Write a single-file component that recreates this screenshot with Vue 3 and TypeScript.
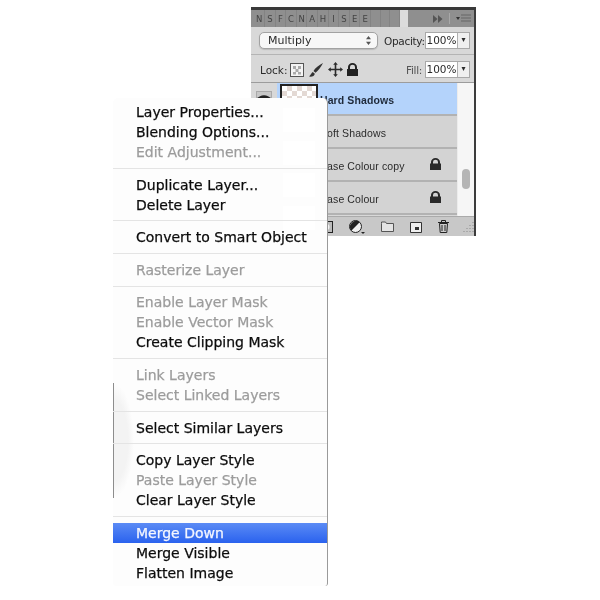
<script setup lang="ts">
interface MenuItem {
  label: string
  off?: boolean
  active?: boolean
}

const tabs = ['N', 'S', 'F', 'C', 'N', 'A', 'H', 'I', 'S', 'E', 'E', '', '', '']

const layers = [
  { name: 'Hard Shadows', selected: true, locked: false },
  { name: 'Soft Shadows', selected: false, locked: false },
  { name: 'Base Colour copy', selected: false, locked: true },
  { name: 'Base Colour', selected: false, locked: true },
]

const menuGroups: MenuItem[][] = [
  [{ label: 'Layer Properties...' }, { label: 'Blending Options...' }, { label: 'Edit Adjustment...', off: true }],
  [{ label: 'Duplicate Layer...' }, { label: 'Delete Layer' }],
  [{ label: 'Convert to Smart Object' }],
  [{ label: 'Rasterize Layer', off: true }],
  [{ label: 'Enable Layer Mask', off: true }, { label: 'Enable Vector Mask', off: true }, { label: 'Create Clipping Mask' }],
  [{ label: 'Link Layers', off: true }, { label: 'Select Linked Layers', off: true }],
  [{ label: 'Select Similar Layers' }],
  [{ label: 'Copy Layer Style' }, { label: 'Paste Layer Style', off: true }, { label: 'Clear Layer Style' }],
  [{ label: 'Merge Down', active: true }, { label: 'Merge Visible' }, { label: 'Flatten Image' }],
]
</script>

<template>
  <div class="page">
    <section class="panel">
      <div class="tabs">
        <span v-for="(t, i) in tabs" :key="i" class="tab">{{ t }}</span>
        <span class="tab tab--active"></span>
        <span class="tabs-end">
          <svg width="10" height="8" viewBox="0 0 10 8"><path d="M0 0l4.500 4L0 8zM5 0l4.500 4L5 8z" fill="#555" /></svg>
          <i class="tabs-rule"></i>
          <svg width="15" height="9" viewBox="0 0 15 9"><path d="M0 3h4L2 6z" fill="#333" /><path d="M5 1h10M5 4h10M5 7h10" stroke="#666" stroke-width="1.200" /></svg>
        </span>
      </div>

      <div class="row row--blend">
        <div class="select">
          <span>Multiply</span>
          <svg width="5" height="9" viewBox="0 0 5 9"><path d="M2.500 0L5 3.300H0zM2.500 9L0 5.700h5z" fill="#555" /></svg>
        </div>
        <label class="field-label">Opacity:</label>
        <div class="field"><span class="field-value">100%</span><span class="field-arrow">▾</span></div>
      </div>

      <div class="row row--lock">
        <span class="lock-label">Lock:</span>
        <svg class="lock-icon" width="14" height="14" viewBox="0 0 14 14">
          <rect x=".5" y=".5" width="13" height="13" fill="#f4f4f4" stroke="#555" />
          <path d="M3 3h3v3H3zM8 3h3v3H8zM5.500 6h3v3h-3zM3 9h3v2.500H3zM8 9h3v2.500H8z" fill="#aaa" />
        </svg>
        <svg class="lock-icon" width="16" height="16" viewBox="0 0 16 16">
          <path d="M15 1C11 3 7 6 5.500 9l2 1.800C10 9 13 5 15 1zM4.800 10c-1.500.5-1.500 2.500-3.800 4.500 3 .5 5.500-.5 5.800-2.800z" fill="#333" />
        </svg>
        <svg class="lock-icon" width="15" height="15" viewBox="0 0 15 15">
          <path d="M7.500 0l2.300 2.800H8.300v3.900h3.900V5.200L15 7.500l-2.800 2.300V8.300H8.300v3.900h1.500L7.500 15l-2.300-2.800h1.500V8.300H2.800v1.500L0 7.500l2.800-2.300v1.500h3.900V2.800H5.200z" fill="#2b2b2b" />
        </svg>
        <svg class="lock-icon" width="11" height="13" viewBox="0 0 11 13">
          <path d="M1 6V4a4.500 4 0 0 1 9 0v2h1v7H0V6zM3 6h5V4a2.500 2.200 0 0 0-5 0z" fill="#222" fill-rule="evenodd" />
        </svg>
        <label class="field-label field-label--fill">Fill:</label>
        <div class="field"><span class="field-value">100%</span><span class="field-arrow">▾</span></div>
      </div>

      <div class="layers">
        <div class="layer-list">
          <div v-for="l in layers" :key="l.name" class="layer">
            <div class="eye-cell">
              <span class="eye"><svg width="14" height="8" viewBox="0 0 14 8"><path d="M0 4c3-5 11-5 14 0-3 5-11 5-14 0z" fill="#222" /></svg></span>
            </div>
            <div class="layer-main" :class="{ 'layer-main--selected': l.selected }">
              <span v-if="l.selected" class="thumb"></span>
              <span class="layer-name" :class="{ 'layer-name--bold': l.selected }">{{ l.name }}</span>
              <svg v-if="l.locked" class="layer-lock" width="11" height="12" viewBox="0 0 11 12">
                <path d="M1 5.500V4a4.500 4 0 0 1 9 0v1.500h1V12H0V5.500zM3 5.500h5V4a2.500 2.200 0 0 0-5 0z" fill="#2a2a2a" fill-rule="evenodd" />
              </svg>
            </div>
          </div>
        </div>
        <div class="scroll"><span class="scroll-thumb"></span></div>
      </div>

      <div class="footer">
        <svg width="13" height="12" viewBox="0 0 13 12"><rect x=".5" y=".5" width="12" height="11" fill="#bbb" stroke="#222" /><circle cx="6.500" cy="6" r="3" fill="#f2f2f2" /></svg>
        <svg width="16" height="14" viewBox="0 0 16 14"><circle cx="6.500" cy="6.500" r="6" fill="#f0f0f0" stroke="#222" /><path d="M2.300 10.700a6 6 0 0 1 8.400-8.400z" fill="#222" /><path d="M12 12h4l-2 2z" fill="#222" /></svg>
        <svg width="13" height="11" viewBox="0 0 13 11"><path d="M.5 2.500V1h4l1 1.500h7v8H.5z" fill="#e4e4e4" stroke="#555" /></svg>
        <svg width="12" height="12" viewBox="0 0 12 12"><path d="M.5 1.500h11v10H.5z" fill="#efefef" stroke="#333" /><path d="M5 6h4v3H5z" fill="#333" /></svg>
        <svg width="11" height="13" viewBox="0 0 11 13"><path d="M1.500 3.500h8l-.7 9H2.200z" fill="#ccc" stroke="#222" /><path d="M0 2.500h11M3.500 2V.5h4V2M4 5v6M7 5v6" stroke="#222" fill="none" /></svg>
        <svg class="grip" width="11" height="11" viewBox="0 0 11 11"><path d="M10 1v1M7 4v1M10 4v1M4 7v1M7 7v1M10 7v1M1 10v1M4 10v1M7 10v1M10 10v1" stroke="#8a8a8a" /></svg>
      </div>
    </section>

    <nav class="menu">
      <i class="ghost ghost--curve"></i>
      <i class="ghost ghost--a"></i>
      <i class="ghost ghost--b"></i>
      <i class="ghost ghost--c"></i>
      <i class="ghost ghost--d"></i>
      <template v-for="(group, g) in menuGroups" :key="g">
        <hr v-if="g > 0" class="sep" />
        <div
          v-for="item in group"
          :key="item.label"
          class="item"
          :class="{ 'item--off': item.off, 'item--active': item.active }"
        >{{ item.label }}</div>
      </template>
    </nav>
  </div>
</template>

<style scoped>
.page {
  position: relative;
  width: 600px;
  height: 600px;
  box-sizing: border-box;
  padding: 7px 0 0 251px;
  overflow: hidden;
  background: #fff;
  font-family: "DejaVu Sans", "Liberation Sans", sans-serif;
}

.panel {
  display: flex;
  flex-direction: column;
  width: 225px;
  height: 229px;
  box-sizing: border-box;
  border-top: 3px solid #3a3a3a;
  border-right: 2px solid #3c3c3c;
  background: #d8d8d8;
  color: #2b2b2b;
  filter: blur(0.35px);
}

.tabs {
  display: flex;
  height: 17px;
  padding-left: 3.500px;
  background: #8f8f8f;
}

.tab {
  display: flex;
  align-items: center;
  justify-content: center;
  width: 9.600px;
  border-right: 1px solid #838383;
  font-size: 8.500px;
  color: #444;
}

.tab:empty {
  width: 8.600px;
}

.tab--active {
  width: 12px;
  border: 0;
  background: #dcdcdc;
}

.tabs-end {
  display: flex;
  flex: 1;
  align-items: center;
  justify-content: flex-end;
  gap: 6px;
  padding-right: 3px;
}

.tabs-rule {
  width: 1px;
  height: 11px;
  background: #a8a8a8;
}

.row {
  display: flex;
  align-items: center;
  box-sizing: border-box;
  padding: 0 4px 0 8px;
  border-bottom: 1px solid #b4b4b4;
  font-size: 10.500px;
}

.row--blend {
  height: 28px;
}

.row--lock {
  height: 28px;
  padding-top: 2px;
  padding-left: 9px;
  border-bottom-color: #9c9c9c;
}

.select {
  display: flex;
  align-items: center;
  justify-content: space-between;
  width: 119px;
  height: 17px;
  box-sizing: border-box;
  padding: 0 6px 0 8px;
  border: 1px solid #a2a2a2;
  border-radius: 5px;
  background: #f7f7f7;
  box-shadow: 0 1px 1px #bbb;
  font-size: 11px;
}

.field-label {
  margin-left: 6px;
  white-space: nowrap;
  letter-spacing: -0.3px;
}

.field-label--fill {
  margin-left: auto;
  margin-right: 3px;
  color: #555;
}

.field {
  display: flex;
  width: 45px;
  height: 17px;
  box-sizing: border-box;
  margin-left: auto;
  border: 1px solid #a8a8a8;
  background: #fff;
}

.field-label--fill + .field {
  margin-left: 0;
}

.field-value {
  flex: 1;
  line-height: 15px;
  text-align: center;
}

.field-arrow {
  width: 11px;
  border-left: 1px solid #b0b0b0;
  background: #efefef;
  line-height: 14px;
  text-align: center;
  font-size: 8px;
}

.lock-label {
  margin-right: 3px;
}

.lock-icon {
  margin-right: 4px;
  flex: none;
}

.layers {
  display: flex;
  height: 133px;
  overflow: hidden;
}

.layer-list {
  width: 206px;
}

.layer {
  display: flex;
  height: 33px;
  box-sizing: border-box;
  border-bottom: 2px solid #b2b2b2;
}

.eye-cell {
  width: 26px;
  padding: 8px 0 0 5px;
  box-sizing: border-box;
}

.eye {
  display: flex;
  align-items: center;
  justify-content: center;
  width: 16px;
  height: 16px;
  border: 1px solid #aaa;
  background: #c8c8c8;
  box-sizing: border-box;
}

.layer-main {
  position: relative;
  display: flex;
  flex: 1;
  align-items: center;
  box-sizing: border-box;
  padding: 2px 0 0 43px;
  background: #d3d3d3;
  font-family: "Liberation Sans", sans-serif;
  font-size: 10.500px;
  letter-spacing: 0.1px;
}

.layer-main--selected {
  background: #b4d3fb;
}

.thumb {
  position: absolute;
  left: 3px;
  top: 1px;
  width: 34px;
  height: 28px;
  border: 2px solid #222;
  border-color: #222 #222 transparent #222;
  background: repeating-conic-gradient(#e3d9d4 0 25%, #fff 0 50%) 0 0 / 10px 10px;
}

.layer-name--bold {
  font-weight: 700;
  color: #1f2a3a;
}

.layer-lock {
  position: absolute;
  right: 16px;
  top: 9px;
}

.scroll {
  position: relative;
  flex: 1;
  border-left: 1px solid #ececec;
  background: #f6f6f6;
}

.scroll-thumb {
  position: absolute;
  left: 4px;
  top: 86px;
  width: 8px;
  height: 20px;
  border-radius: 4px;
  background: #b5b5b5;
}

.footer {
  display: flex;
  flex: 1;
  align-items: center;
  justify-content: flex-end;
  gap: 16px;
  padding-right: 0.500px;
  border-top: 1px solid #aaa;
  background: #c8c8c8;
}

.grip {
  margin-left: -2px;
}

.menu {
  position: absolute;
  left: 113px;
  top: 98px;
  width: 215px;
  height: 488px;
  box-sizing: border-box;
  padding-top: 4px;
  border-radius: 5px 5px 3px 3px;
  border-right: 1px solid #9a9a9a;
  background: #fdfdfd;
  font-size: 14px;
  color: #0c0c0c;
  filter: blur(0.25px);
}

.ghost {
  position: absolute;
  background: #fff;
}

.ghost--curve {
  left: 0;
  top: 285px;
  width: 20px;
  height: 115px;
  border-left: 1px solid #8d8d8d;
  background: radial-gradient(ellipse 20px 57px at 0 50%, #f3f3f3 70%, #fdfdfd 100%);
}

.ghost--a {
  left: 170px;
  top: 10px;
  width: 32px;
  height: 24px;
}

.ghost--b {
  left: 170px;
  top: 43px;
  width: 32px;
  height: 24px;
}

.ghost--c {
  left: 170px;
  top: 75px;
  width: 32px;
  height: 24px;
}

.ghost--d {
  left: 170px;
  top: 108px;
  width: 32px;
  height: 24px;
}

.item {
  position: relative;
  height: 20px;
  padding-left: 23px;
  line-height: 20px;
  white-space: nowrap;
  -webkit-text-stroke: 0.25px currentColor;
}

.item--off {
  color: #9c9c9c;
}

.item--active {
  background: linear-gradient(#5b8bf5, #2a62ee);
  color: #f4f6ff;
}

.sep {
  position: relative;
  height: 1px;
  margin: 5.800px 0;
  border: 0;
  background: #e4e4e4;
}
</style>
